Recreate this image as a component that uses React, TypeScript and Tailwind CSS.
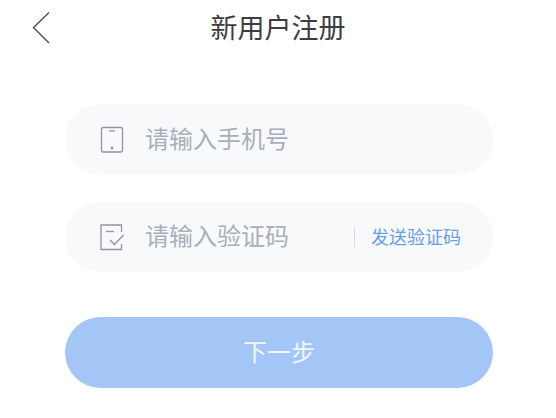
const cjk = { fontFamily: '"Noto Sans CJK SC", "Noto Sans", sans-serif' };

export default function App() {
  return (
    <div className="flex h-[418px] w-[556px] flex-col overflow-hidden bg-white" style={cjk}>
      <header className="relative flex h-[56px] shrink-0 items-center justify-center">
        <svg className="absolute left-[32px] top-[11px]" width="20" height="33" viewBox="0 0 20 33" fill="none">
          <path d="M17 1.5 L1.5 16.5 L17 32" stroke="#4d4d4d" strokeWidth="1.4" />
        </svg>
        <h1 className="mb-[4px] text-[27px] font-normal leading-none text-[#3d3d3d]">新用户注册</h1>
      </header>

      <main className="flex flex-col pl-[65px] pr-[63px] pt-[48px]">
        <div className="flex h-[71px] items-center rounded-full bg-[#f8f9fb] pl-[35px]">
          <svg width="24" height="28" viewBox="0 0 24 28" fill="none">
            <rect x="1.5" y="1.5" width="21" height="24.5" rx="1.5" stroke="#8f949d" strokeWidth="1.3" />
            <path d="M9 5 H15" stroke="#8f949d" strokeWidth="1.3" />
            <circle cx="12" cy="22" r="1.4" fill="#8f949d" />
          </svg>
          <span className="mb-[4px] ml-[21px] text-[24px] leading-none text-[#a9afba]">请输入手机号</span>
        </div>

        <div className="mt-[27px] flex h-[70px] items-center rounded-full bg-[#f8f9fb] pl-[35px] pr-[32px]">
          <svg width="26" height="28" viewBox="0 0 26 28" fill="none">
            <path d="M21.5 9 V2 H1 V26.5 H21.5 V21" stroke="#8f949d" strokeWidth="1.3" />
            <path d="M6 8.5 H14" stroke="#8f949d" strokeWidth="1.3" />
            <path d="M10 17 L14.5 21.5 L23.5 12" stroke="#8f949d" strokeWidth="1.3" />
          </svg>
          <span className="mb-[4px] ml-[19px] text-[24px] leading-none text-[#a9afba]">请输入验证码</span>
          <span className="ml-auto h-[20px] w-px bg-[#d5d8dd]" />
          <span className="mb-[2px] ml-[16px] text-[18px] leading-none text-[#6a9fe8]">发送验证码</span>
        </div>

        <button className="mt-[45px] flex h-[71px] items-center justify-center rounded-full bg-[#a3c6f7] pb-[3px] text-[24px] leading-none text-white/85">
          下一步
        </button>
      </main>
    </div>
  );
}
